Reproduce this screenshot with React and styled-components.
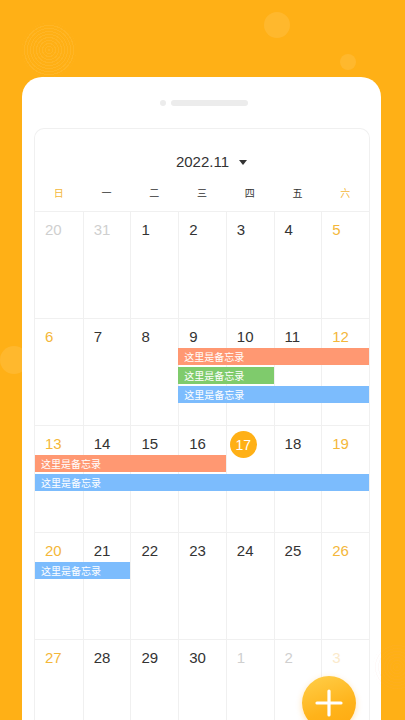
import React from 'react';
import styled, { createGlobalStyle } from 'styled-components';

const GlobalStyle = createGlobalStyle`
  html, body {
    margin: 0;
    padding: 0;
    height: 720px;
    overflow: hidden;
    background: #ffb016;
    font-family: "Liberation Sans", "Noto Sans CJK SC", sans-serif;
  }
`;

const Screen = styled.div`
  position: relative;
  width: 405px;
  height: 720px;
  overflow: hidden;
  background: #ffb016;
  padding-top: 77px;
  box-sizing: border-box;
`;

const Bubble = styled.div`
  position: absolute;
  left: ${p => p.x - p.r}px;
  top: ${p => p.y - p.r}px;
  width: ${p => p.r * 2}px;
  height: ${p => p.r * 2}px;
  border-radius: 50%;
  background: ${p => p.ring
    ? `repeating-radial-gradient(circle, ${p.tint} 0 1px, rgba(255,255,255,0) 1px 3px)`
    : 'rgba(255,255,255,0.1)'};
  z-index: ${p => (p.front ? 3 : 0)};
`;

const Phone = styled.div`
  position: relative;
  z-index: 1;
  margin-left: 22px;
  width: 359px;
  height: 643px;
  background: #fff;
  border-radius: 20px 20px 0 0;
  padding: 0 11px 0 12px;
  box-sizing: border-box;
`;

const Notch = styled.div`
  height: 51px;
  display: flex;
  align-items: center;
  justify-content: center;
  gap: 5px;
  padding-left: 4px;
`;

const NotchDot = styled.span`
  width: 6px;
  height: 6px;
  border-radius: 50%;
  background: #ececec;
`;

const NotchBar = styled.span`
  width: 77px;
  height: 6px;
  border-radius: 3px;
  background: #ececec;
`;

const Calendar = styled.div`
  border: 1px solid #f0f0f0;
  border-bottom: none;
  border-radius: 10px 10px 0 0;
  overflow: hidden;
`;

const Header = styled.div`
  height: 82px;
  display: flex;
  flex-direction: column;
  align-items: center;
`;

const Title = styled.div`
  margin-top: 23px;
  display: flex;
  align-items: center;
  gap: 10px;
  padding-left: 19px;
  font-size: 15px;
  color: #333;
  line-height: 20px;
`;

const Caret = styled.span`
  width: 0;
  height: 0;
  border-left: 4.5px solid transparent;
  border-right: 4.5px solid transparent;
  border-top: 5px solid #333;
`;

const WeekdayRow = styled.div`
  margin-top: 14px;
  width: 100%;
  display: grid;
  grid-template-columns: repeat(7, 1fr);
`;

const Weekday = styled.div`
  text-align: center;
  font-family: "Noto Sans CJK SC", sans-serif;
  font-size: 10px;
  line-height: 14px;
  color: ${p => (p.weekend ? '#f4b73a' : '#333')};
`;

const Week = styled.div`
  display: grid;
  grid-template-columns: repeat(7, 1fr);
  grid-template-rows: 27px repeat(3, 17px) 1fr;
  row-gap: 2px;
  height: 107px;
  border-top: 1px solid #f0f0f0;
  box-sizing: border-box;
`;

const DayCell = styled.div`
  grid-row: 1 / -1;
  grid-column: ${p => p.col};
  border-left: ${p => (p.col === 1 ? 'none' : '1px solid #f0f0f0')};
  padding: 9px 0 0 10px;
`;

const DayNum = styled.span`
  display: inline-flex;
  align-items: center;
  justify-content: center;
  font-size: 15px;
  line-height: 18px;
  color: ${p => p.color};
  ${p => p.today && `
    width: 27px;
    height: 27px;
    margin: -4px 0 0 -7px;
    border-radius: 50%;
    background: #ffb016;
    color: #fff;
    font-size: 14px;
  `}
`;

const EventBar = styled.div`
  grid-row: ${p => p.lane + 1};
  grid-column: ${p => p.start} / span ${p => p.span};
  z-index: 1;
  background: ${p => p.color};
  color: #fff;
  font-family: "Noto Sans CJK SC", sans-serif;
  font-size: 10px;
  line-height: 17px;
  padding-left: 6px;
  white-space: nowrap;
  overflow: hidden;
`;

const Fab = styled.button`
  position: absolute;
  z-index: 4;
  left: 302px;
  top: 676px;
  width: 54px;
  height: 54px;
  border: none;
  border-radius: 50%;
  padding: 0;
  display: flex;
  align-items: flex-start;
  justify-content: center;
  padding-top: 13px;
  background: linear-gradient(160deg, #ffcf4a 0%, #ffb31a 60%, #ffa90f 100%);
  box-shadow: 0 2px 6px rgba(255, 160, 0, 0.3);
`;

const GOLD = '#f4b73a';
const DARK = '#333';
const FADED = '#cfcfcf';

const weeks = [
  {
    days: [[20, 'prev'], [31, 'prev'], [1], [2], [3], [4], [5]],
    events: [],
  },
  {
    days: [[6], [7], [8], [9], [10], [11], [12]],
    events: [
      { lane: 1, start: 4, span: 4, color: '#ff9872' },
      { lane: 2, start: 4, span: 2, color: '#7fcb6c' },
      { lane: 3, start: 4, span: 4, color: '#7cbcfd' },
    ],
  },
  {
    days: [[13], [14], [15], [16], [17, 'today'], [18], [19]],
    events: [
      { lane: 1, start: 1, span: 4, color: '#ff9872' },
      { lane: 2, start: 1, span: 7, color: '#7cbcfd' },
    ],
  },
  {
    days: [[20], [21], [22], [23], [24], [25], [26]],
    events: [{ lane: 1, start: 1, span: 2, color: '#7cbcfd' }],
  },
  {
    days: [[27], [28], [29], [30], [1, 'next'], [2, 'next'], [3, 'nextEnd']],
    events: [],
  },
];

const weekdays = ['日', '一', '二', '三', '四', '五', '六'];

function dayColor(kind, col) {
  if (kind === 'prev' || kind === 'next') return FADED;
  if (kind === 'nextEnd') return '#fbeacb';
  if (col === 1 || col === 7) return GOLD;
  return DARK;
}

export default function App() {
  return (
    <Screen>
      <GlobalStyle />
      <Bubble ring tint="rgba(255,255,255,0.07)" x={49} y={50} r={27} />
      <Bubble x={277} y={25} r={13} />
      <Bubble x={348} y={62} r={8} />
      <Bubble x={14} y={360} r={14} />
      <Phone>
        <Notch>
          <NotchDot />
          <NotchBar />
        </Notch>
        <Calendar>
          <Header>
            <Title>
              2022.11
              <Caret />
            </Title>
            <WeekdayRow>
              {weekdays.map((w, i) => (
                <Weekday key={w} weekend={i === 0 || i === 6}>{w}</Weekday>
              ))}
            </WeekdayRow>
          </Header>
          {weeks.map((week, wi) => (
            <Week key={wi}>
              {week.days.map(([n, kind], i) => (
                <DayCell key={i} col={i + 1}>
                  <DayNum today={kind === 'today'} color={dayColor(kind, i + 1)}>
                    {n}
                  </DayNum>
                </DayCell>
              ))}
              {week.events.map((ev, ei) => (
                <EventBar key={ei} {...ev}>这里是备忘录</EventBar>
              ))}
            </Week>
          ))}
        </Calendar>
      </Phone>
      <Bubble ring front tint="rgba(240,160,150,0.06)" x={397} y={667} r={24} />
      <Fab aria-label="add">
        <svg width="28" height="28" viewBox="0 0 28 28">
          <path d="M14 2v24M2 14h24" stroke="#fff" strokeWidth="3.2" strokeLinecap="round" />
        </svg>
      </Fab>
    </Screen>
  );
}
